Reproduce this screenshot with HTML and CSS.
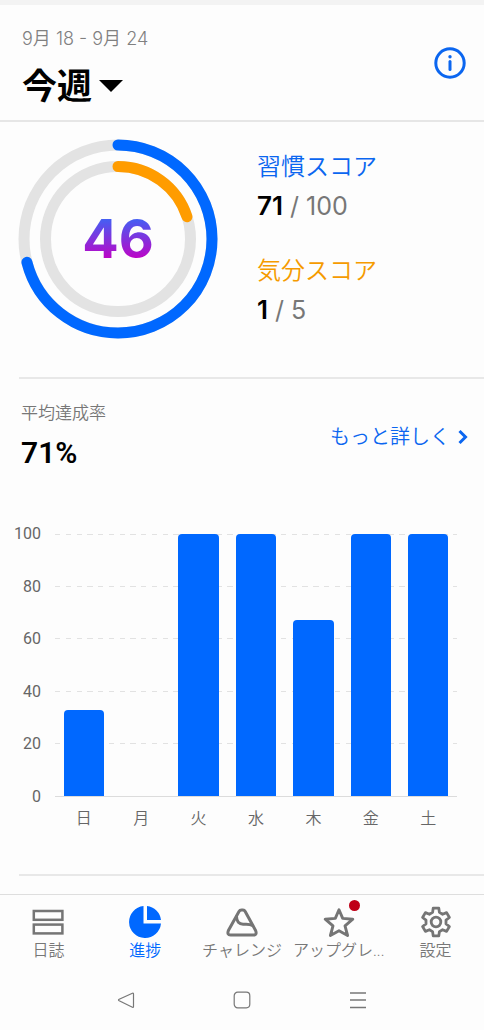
FILE: index.html
```html
<!DOCTYPE html>
<html lang="ja">
<head>
<meta charset="utf-8">
<meta name="viewport" content="width=device-width, initial-scale=1">
<title>進捗</title>
<link rel="stylesheet" href="styles.css">
</head>
<body>
<div class="app">
  <header class="header">
    <div class="period">
      <p class="period-dates">9月 18 - 9月 24</p>
      <button class="period-button" type="button">
        <span>今週</span>
        <svg width="24" height="12" viewBox="0 0 24 12" aria-hidden="true"><path d="M0 0h24L12 12z" fill="#000"/></svg>
      </button>
    </div>
    <button class="icon-button" type="button" aria-label="情報">
      <svg width="32" height="32" viewBox="0 0 32 32" aria-hidden="true">
        <circle cx="16" cy="16" r="14.2" fill="none" stroke="#0b66f0" stroke-width="3"/>
        <circle cx="16" cy="9.8" r="1.7" fill="#0b66f0"/>
        <path d="M16 14.5v8" stroke="#0b66f0" stroke-width="3" stroke-linecap="round"/>
      </svg>
    </button>
  </header>

  <main class="main">
    <section class="scores">
      <div class="rings">
        <svg class="rings-art" viewBox="0 0 200 200" aria-hidden="true">
          <g fill="none" stroke-width="11" stroke-linecap="round" transform="rotate(-90 100 100)">
            <circle cx="100" cy="100" r="94" stroke="#e3e3e3"/>
            <circle cx="100" cy="100" r="72.5" stroke="#e3e3e3"/>
            <circle cx="100" cy="100" r="94" stroke="#0068ff" pathLength="100" stroke-dasharray="71 100"/>
            <circle cx="100" cy="100" r="72.5" stroke="#ff9c00" pathLength="100" stroke-dasharray="20 100"/>
          </g>
        </svg>
        <strong class="rings-total">46</strong>
      </div>
      <dl class="score-list">
        <div class="score">
          <dt class="score-name score-habit">習慣スコア</dt>
          <dd class="score-value"><b>71</b> / 100</dd>
        </div>
        <div class="score">
          <dt class="score-name score-mood">気分スコア</dt>
          <dd class="score-value"><b>1</b> / 5</dd>
        </div>
      </dl>
    </section>

    <section class="rate">
      <div class="rate-head">
        <div>
          <h2 class="rate-label">平均達成率</h2>
          <p class="rate-value">71%</p>
        </div>
        <a class="more" href="#details">
          <span>もっと詳しく</span>
          <svg width="10" height="16" viewBox="0 0 10 16" aria-hidden="true"><path d="M1.5 2 7.5 8l-6 6" fill="none" stroke="#0b66f0" stroke-width="3"/></svg>
        </a>
      </div>

      <div class="chart">
        <div class="axis">
          <span>100</span><span>80</span><span>60</span><span>40</span><span>20</span><span>0</span>
        </div>
        <div class="plot">
          <svg class="grid" aria-hidden="true">
            <g stroke="#e2e2e2" stroke-dasharray="5.38" shape-rendering="crispEdges">
              <line x2="100%" y1="0" y2="0"/>
              <line x2="100%" y1="20%" y2="20%"/>
              <line x2="100%" y1="40%" y2="40%"/>
              <line x2="100%" y1="60%" y2="60%"/>
              <line x2="100%" y1="80%" y2="80%"/>
            </g>
          </svg>
          <div class="bars">
            <div class="bar" style="height:33%"></div>
            <div class="bar" style="height:0%"></div>
            <div class="bar" style="height:100%"></div>
            <div class="bar" style="height:100%"></div>
            <div class="bar" style="height:67%"></div>
            <div class="bar" style="height:100%"></div>
            <div class="bar" style="height:100%"></div>
          </div>
        </div>
        <div class="days">
          <span>日</span><span>月</span><span>火</span><span>水</span><span>木</span><span>金</span><span>土</span>
        </div>
      </div>
    </section>
  </main>

  <nav class="tabs">
    <a class="tab" href="#diary">
      <svg width="32" height="32" viewBox="0 0 32 32" aria-hidden="true"><g fill="none" stroke="#757575" stroke-width="2.5"><rect x="1.8" y="5" width="28.6" height="8.8"/><rect x="1.8" y="18.6" width="28.6" height="8.8"/></g></svg>
      <span class="tab-label">日誌</span>
    </a>
    <a class="tab tab-active" href="#progress" aria-current="page">
      <svg width="32" height="32" viewBox="0 0 32 32" aria-hidden="true"><path fill="#0068ff" d="M14.5 0v17.5H32A16 16 0 1 1 14.5 0zM18 0A16 16 0 0 1 32 14H18z"/></svg>
      <span class="tab-label">進捗</span>
    </a>
    <a class="tab" href="#challenge">
      <svg width="32" height="32" viewBox="0 0 32 32" aria-hidden="true"><g fill="none" stroke="#757575" stroke-width="3" stroke-linejoin="round" stroke-linecap="round"><path d="M13 5.5Q13.8 4 15.5 4H17Q18.4 4 19.2 5.5L29.6 24.5Q31.3 29 27.5 29H4.5Q.8 29 2.4 24.5z"/><path d="M10.5 10.5C10.5 15.5 13 18.5 17.5 18.3 21 18 24.5 18.3 26.5 19.5"/></g></svg>
      <span class="tab-label">チャレンジ</span>
    </a>
    <a class="tab" href="#upgrade">
      <span class="tab-icon">
        <svg width="32" height="32" viewBox="0 0 32 32" aria-hidden="true"><path d="M16 3.8 19.7 12.4 29.8 13.2 22 19.9 24.6 29.5 16 24.8 7.4 29.5 10 19.9 2.2 13.2 12.3 12.4z" fill="none" stroke="#757575" stroke-width="2.9" stroke-linejoin="round"/></svg>
        <span class="badge"></span>
      </span>
      <span class="tab-label">アップグレ...</span>
    </a>
    <a class="tab" href="#settings">
      <svg width="32" height="32" viewBox="-16 -16 32 32" aria-hidden="true"><g fill="none" stroke="#757575" stroke-width="2.8" stroke-linejoin="round"><path d="M-3.4-9.6-2.8-13.9H2.8L3.4-9.6 6.6-7.7 10.6-9.4 13.4-4.5 10-1.9V1.9L13.4 4.5 10.6 9.4 6.6 7.7 3.4 9.6 2.8 13.9H-2.8L-3.4 9.6-6.6 7.7-10.6 9.4-13.4 4.5-10 1.9V-1.9L-13.4-4.5-10.6-9.4-6.6-7.7z"/><circle r="4.8"/></g></svg>
      <span class="tab-label">設定</span>
    </a>
  </nav>

  <div class="system">
    <button class="system-button" type="button" aria-label="戻る"><svg width="18" height="18" viewBox="0 0 18 18"><path d="M15.4 2.2 2.2 8.2Q.8 9 2.2 9.8L15.4 16.3Q16.5 16.7 16.5 15.5V3Q16.5 1.8 15.4 2.2z" fill="none" stroke="#777" stroke-width="1.2"/></svg></button>
    <button class="system-button" type="button" aria-label="ホーム"><svg width="18" height="18" viewBox="0 0 18 18"><rect x="1.2" y="1.2" width="15.6" height="15.6" rx="3.5" fill="none" stroke="#777" stroke-width="1.2"/></svg></button>
    <button class="system-button" type="button" aria-label="メニュー"><svg width="18" height="18" viewBox="0 0 18 18"><path d="M1 2h16M1 9h16M1 16.5h16" fill="none" stroke="#777" stroke-width="1.3"/></svg></button>
  </div>
</div>
</body>
</html>
```
FILE: styles.css
```css
* {
  box-sizing: border-box;
}

body {
  margin: 0;
  background: #fdfdfd;
  color: #000;
  font-family: Inter, "Noto Sans CJK JP", sans-serif;
}

p, h2, dl, dd {
  margin: 0;
}

button {
  padding: 0;
  border: 0;
  background: none;
  color: inherit;
  font-family: inherit;
}

a {
  text-decoration: none;
}

svg {
  display: block;
}

.app {
  display: flex;
  flex-direction: column;
  min-height: 100vh;
  border-top: 5px solid #f3f3f3;
}

.header {
  display: flex;
  align-items: flex-start;
  justify-content: space-between;
  padding: 21px 18px 9px 22px;
  border-bottom: 2px solid #e6e6e6;
}

.icon-button {
  margin-top: 21px;
}

.period-dates {
  color: #808080;
  font-size: 18px;
  font-weight: 350;
  line-height: 26px;
}

.period-button {
  display: flex;
  align-items: center;
  gap: 7px;
  margin-top: 9px;
  font-size: 35px;
  font-weight: 700;
  line-height: 50px;
}

.main {
  flex: 1;
}

.scores {
  display: flex;
  align-items: flex-start;
  gap: 39px;
  margin-left: 18px;
  padding: 17px 0 38px;
}

.rings {
  display: grid;
  width: 200px;
  place-items: center;
}

.rings-art,
.rings-total {
  grid-area: 1 / 1;
}

.rings-art {
  width: 100%;
}

.rings-total {
  background: linear-gradient(#3f63f5 10%, #c400c4 90%);
  background-clip: text;
  color: transparent;
  font-size: 54px;
  line-height: 54px;
}

.score-list {
  display: grid;
  gap: 26px;
  padding-top: 10px;
}

.score-name {
  font-size: 24px;
  font-weight: 350;
  line-height: 36px;
}

.score-habit {
  color: #0b66f0;
}

.score-mood {
  color: #f59b00;
}

.score-value {
  color: #777;
  font-size: 25px;
  line-height: 41px;
}

.score-value b {
  color: #000;
  font-size: 26px;
  font-weight: 600;
}

.rate {
  margin-left: 19px;
  padding-top: 21px;
  border-top: 2px solid #e8e8e8;
  border-bottom: 2px solid #e8e8e8;
}

.rate-head {
  display: flex;
  align-items: center;
  justify-content: space-between;
  padding: 0 16px 0 2px;
}

.rate-label {
  color: #777;
  font-size: 17px;
  font-weight: 350;
  line-height: 26px;
}

.rate-value {
  margin-top: 7px;
  font-family: Roboto, sans-serif;
  font-size: 30px;
  font-weight: 600;
  line-height: 40px;
}

.more {
  display: flex;
  align-items: center;
  gap: 8px;
  color: #0b66f0;
  font-size: 20px;
  font-weight: 350;
  line-height: 30px;
}

.chart {
  display: grid;
  grid-template-columns: 27px 1fr;
  column-gap: 14px;
  margin: 51px 27px 0 -5px;
  padding-bottom: 43px;
  color: #666;
  font-family: Roboto, "Noto Sans CJK JP", sans-serif;
  font-size: 16px;
}

.axis {
  display: flex;
  flex-direction: column;
  justify-content: space-between;
  height: 283px;
  line-height: 20px;
  text-align: right;
}

.plot {
  display: grid;
  margin: 10px 0;
  border-bottom: 1px solid #dcdcdc;
}

.grid,
.bars {
  grid-area: 1 / 1;
  width: 100%;
  height: 100%;
}

.grid {
  overflow: visible;
}

.bars,
.days {
  display: grid;
  grid-template-columns: repeat(7, 1fr);
  justify-items: center;
}

.bars {
  align-items: end;
}

.bar {
  width: 70%;
  border-radius: 4px 4px 0 0;
  background: #0068ff;
}

.days {
  grid-column: 2;
  font-weight: 350;
  line-height: 24px;
}

.tabs {
  display: grid;
  grid-template-columns: repeat(5, minmax(0, 1fr));
  margin-top: 18px;
  padding-top: 11px;
  border-top: 1px solid #dedede;
}

.tab {
  display: flex;
  flex-direction: column;
  align-items: center;
  color: #777;
  font-family: Roboto, "Noto Sans CJK JP", sans-serif;
  font-size: 16px;
  font-weight: 350;
  line-height: 26px;
}

.tab-active {
  color: #0068ff;
}

.tab-label {
  white-space: nowrap;
}

.tab-icon {
  position: relative;
}

.badge {
  position: absolute;
  top: -6px;
  right: -5px;
  width: 11px;
  height: 11px;
  border-radius: 50%;
  background: #bf0018;
}

.system {
  display: flex;
  justify-content: center;
  gap: 98px;
  padding: 27px 0 21px;
}

.system-button {
  width: 18px;
  height: 18px;
}
```
